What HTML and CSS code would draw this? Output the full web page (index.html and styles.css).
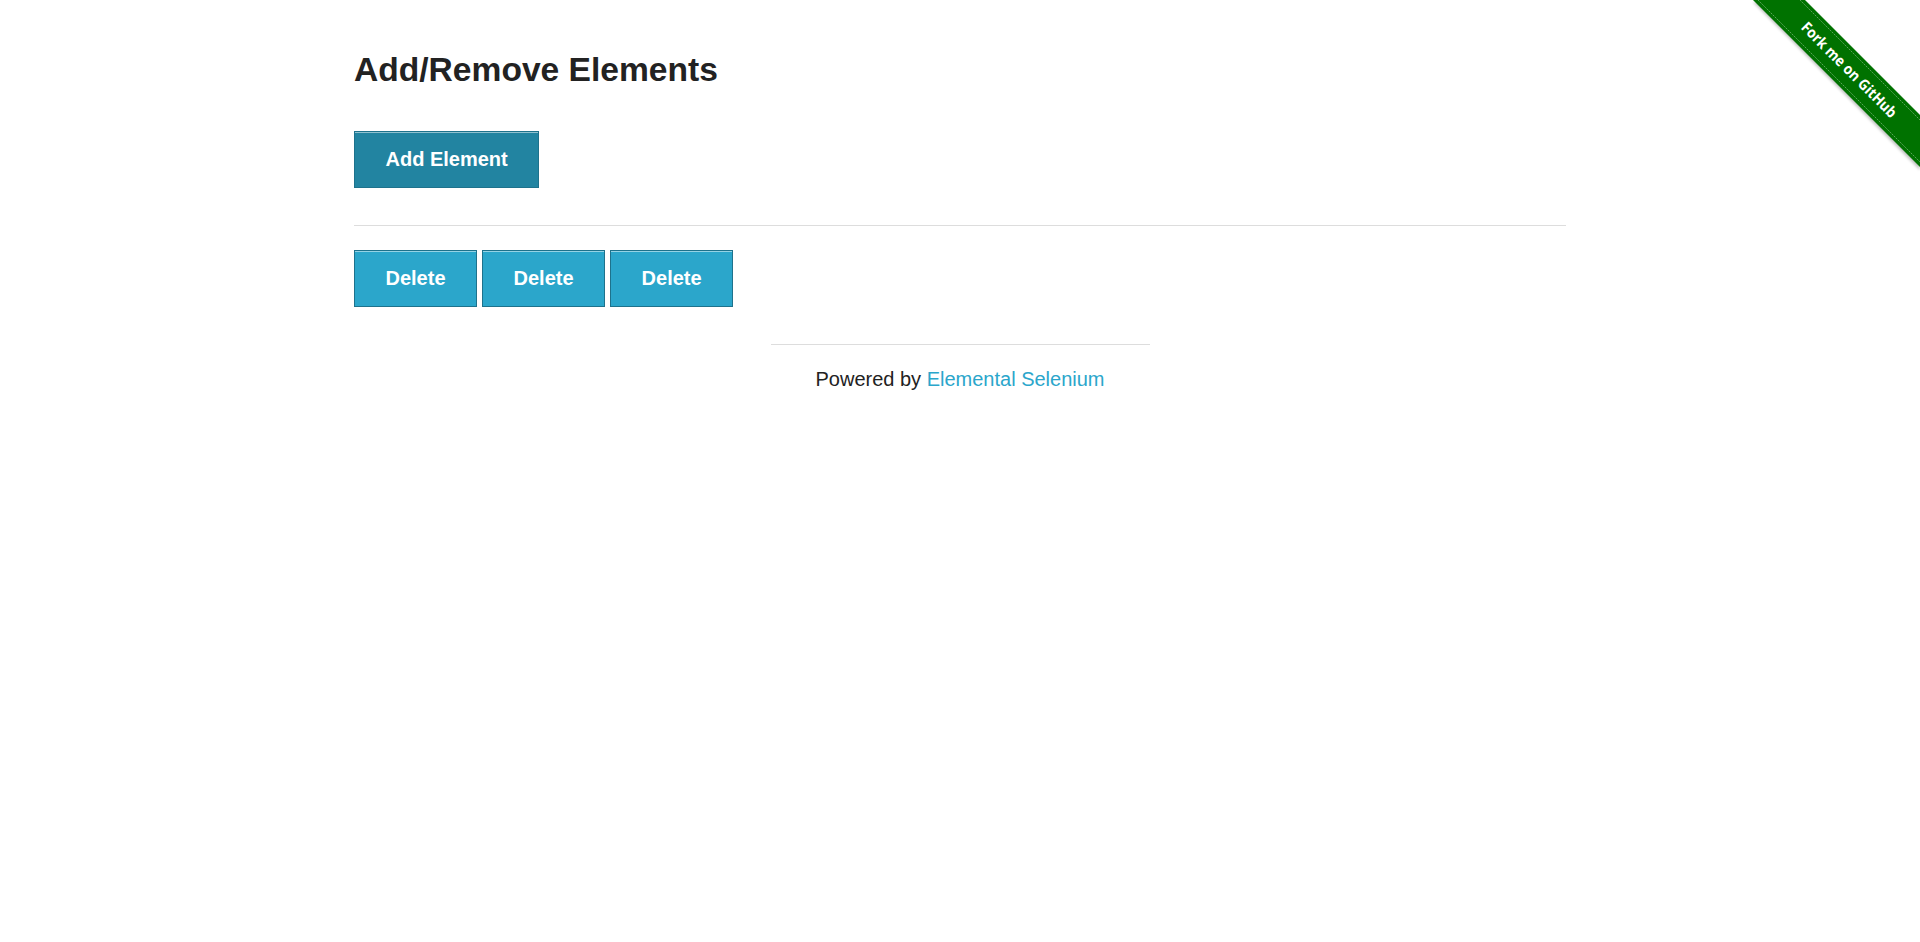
FILE: index.html
```html
<!DOCTYPE html>
<html lang="en">
<head>
<meta charset="utf-8">
<title>The Internet</title>
<link rel="stylesheet" href="styles.css">
</head>
<body>
<a class="ribbon" href="#" aria-label="Fork me on GitHub">
  <svg width="186" height="186" viewBox="0 0 186 186">
    <defs>
      <filter id="sh" x="-20%" y="-20%" width="140%" height="140%">
        <feGaussianBlur stdDeviation="1.5"/>
      </filter>
    </defs>
    <polygon points="19,2 71,2 186,117 186,170" fill="#000" opacity="0.25" filter="url(#sh)"/>
    <polygon points="19,0 71,0 186,115 186,167" fill="#007200"/>
    <line x1="24" y1="0" x2="186" y2="162" stroke="#ffffff" stroke-opacity="0.35" stroke-width="1" stroke-dasharray="2 1"/>
    <line x1="66" y1="0" x2="186" y2="120" stroke="#ffffff" stroke-opacity="0.35" stroke-width="1" stroke-dasharray="2 1"/>
    <text x="115" y="75" transform="rotate(45 115 70)" text-anchor="middle" textLength="128" lengthAdjust="spacingAndGlyphs" class="ribbon-text">Fork me on GitHub</text>
  </svg>
</a>

<div class="page">
  <div class="example">
    <h3 class="title">Add/Remove Elements</h3>
    <button class="btn btn-add" type="button">Add Element</button>
    <hr class="rule">
    <div class="elements">
      <button class="btn btn-delete" type="button">Delete</button>
      <button class="btn btn-delete" type="button">Delete</button>
      <button class="btn btn-delete" type="button">Delete</button>
    </div>
  </div>
  <div class="footer">
    <hr class="footer-rule">
    <p class="powered">Powered by <a href="#">Elemental Selenium</a></p>
  </div>
</div>
</body>
</html>
```
FILE: styles.css
```css
html, body {
  margin: 0;
  padding: 0;
  background: #ffffff;
}

body {
  font-family: "Liberation Sans", Arial, Helvetica, sans-serif;
  color: #222222;
  font-size: 20px;
}

.ribbon {
  position: absolute;
  top: 0;
  right: 0;
  width: 186px;
  height: 186px;
  display: block;
}

.ribbon svg {
  display: block;
}

.ribbon-text {
  font-family: "Open Sans", "DejaVu Sans", sans-serif;
  font-weight: 700;
  font-size: 15px;
  fill: #ffffff;
}

.page {
  width: 1212px;
  margin: 0 auto;
  padding-top: 49px;
}

.example {
  display: flex;
  flex-direction: column;
  align-items: flex-start;
}

.title {
  margin: 0 0 39px 0;
  font-size: 33.6px;
  line-height: 42.5px;
  font-weight: bold;
  color: #222222;
}

.btn {
  font-family: "Liberation Sans", Arial, Helvetica, sans-serif;
  font-size: 20px;
  line-height: 23px;
  font-weight: bold;
  color: #ffffff;
  background: #2ba6cb;
  border: 1px solid #1e728c;
  box-shadow: inset 0 1px 0 rgba(255, 255, 255, 0.5);
  padding: 16px 30.5px 16px;
  margin: 0;
  cursor: pointer;
  border-radius: 0;
}

.btn-add {
  background: #2284a1;
}

.rule {
  align-self: stretch;
  margin: 37px 0 24px 0;
  border: 0;
  border-top: 1px solid #dddddd;
  height: 0;
}

.elements {
  display: flex;
  gap: 5px;
}

.footer {
  display: flex;
  flex-direction: column;
  align-items: center;
  padding-top: 37px;
}

.footer-rule {
  width: 379px;
  margin: 0;
  border: 0;
  border-top: 1px solid #dddddd;
  height: 0;
}

.powered {
  margin: 18px 0 0 0;
  font-size: 20px;
  line-height: 32px;
  color: #222222;
}

.powered a {
  color: #2ba6cb;
  text-decoration: none;
}
```
